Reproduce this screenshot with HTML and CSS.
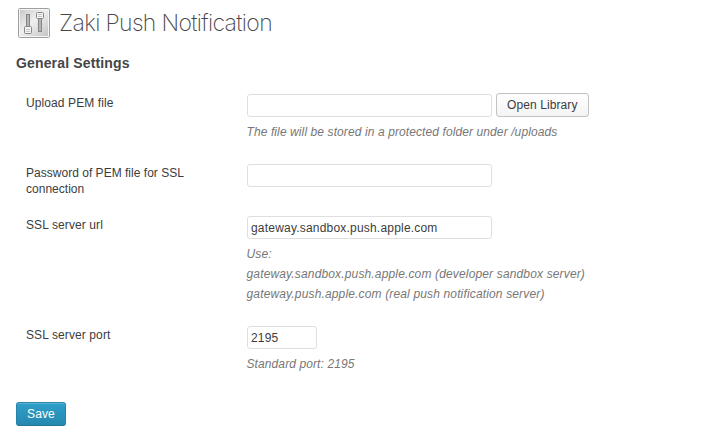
FILE: index.html
```html
<!DOCTYPE html>
<html lang="en">
<head>
<meta charset="utf-8">
<title>Zaki Push Notification</title>
<link rel="stylesheet" href="styles.css">
</head>
<body>
<main class="page">
  <header class="page-header">
    <svg class="page-icon" width="32" height="32" viewBox="0 0 32 32" aria-hidden="true">
      <defs>
        <linearGradient id="plate" x1="0" y1="0" x2="1" y2="1"><stop offset="0" stop-color="#c9c9c9"/><stop offset=".45" stop-color="#f0f0f0"/><stop offset="1" stop-color="#c4c4c4"/></linearGradient>
      </defs>
      <rect x=".5" y=".5" width="31" height="29" rx="1" fill="#f4f4f4" stroke="#a0a0a0"/>
      <rect x="2" y="2" width="28" height="26" fill="url(#plate)"/>
      <rect x="8.500" y="6.500" width="3" height="14" fill="#b5b5b5" stroke="#858585"/>
      <rect x="20.500" y="9.500" width="3" height="14" fill="#b5b5b5" stroke="#858585"/>
      <rect x="6.500" y="18.500" width="7" height="7" rx="1" fill="#f5f5f5" stroke="#858585"/>
      <rect x="18.500" y="4.500" width="7" height="6" rx="1" fill="#f5f5f5" stroke="#858585"/>
      <path d="M8 21.500h4M8 23.500h4M20 6.500h4M20 8.500h4" stroke="#c4c4c4"/>
    </svg>
    <h1 class="page-title">Zaki Push Notification</h1>
  </header>
  <h2 class="section-title">General Settings</h2>
  <form class="settings">
    <div class="row row-upload">
      <label class="label" for="pem">Upload PEM file</label>
      <div>
        <div class="controls"><input class="field" id="pem" type="text"><button class="button" type="button">Open Library</button></div>
        <p class="hint hint-short">The file will be stored in a protected folder under /uploads</p>
      </div>
    </div>
    <div class="row row-password">
      <label class="label label-long" for="password">Password of PEM file for SSL connection</label>
      <div class="controls"><input class="field" id="password" type="text"></div>
    </div>
    <div class="row row-url">
      <label class="label" for="url">SSL server url</label>
      <div>
        <div class="controls"><input class="field" id="url" type="text" value="gateway.sandbox.push.apple.com"></div>
        <p class="hint">Use:<br>gateway.sandbox.push.apple.com (developer sandbox server)<br>gateway.push.apple.com (real push notification server)</p>
      </div>
    </div>
    <div class="row row-port">
      <label class="label" for="port">SSL server port</label>
      <div>
        <div class="controls"><input class="field field-small" id="port" type="text" value="2195"></div>
        <p class="hint hint-short">Standard port: 2195</p>
      </div>
    </div>
    <button class="button button-primary" type="button">Save</button>
  </form>
</main>
</body>
</html>
```
FILE: styles.css
```css
* { box-sizing: border-box; }
body { margin: 0; background: #fff; color: #3c3c3c; font: 12px/16px "Liberation Sans", Arial, sans-serif; }
.page { padding: 8px 0 0 16px; }
.page-header { display: flex; height: 32px; padding-left: 2px; }
.page-icon { flex: none; }
.page-title { margin: 0 0 0 9px; color: #464646; font: 200 23px/30px Inter, "Open Sans", sans-serif; letter-spacing: -.66px; white-space: nowrap; }
.section-title { margin: 15px 0 23px; color: #464646; font-size: 14px; line-height: 16px; font-weight: bold; letter-spacing: .15px; }
.row { display: grid; grid-template-columns: 173px 1fr; column-gap: 48px; padding-left: 10px; }
.row-upload { height: 70px; }
.row-password { height: 52px; }
.row-url { height: 110px; }
.row-port { height: 76px; }
.label { padding-top: 1px; letter-spacing: .1px; }
.label-long { letter-spacing: .02px; }
.controls { display: flex; align-items: flex-start; gap: 4px; height: 23px; }
.field { width: 245px; height: 23px; margin: 0; padding: 0 3px; border: 1px solid #dfdfdf; border-radius: 3px; background: #fff; color: #3c3c3c; font: inherit; letter-spacing: .2px; }
.field-small { width: 70px; }
.hint { margin: 5px 0 0 -.5px; color: #777; font-style: italic; line-height: 20px; letter-spacing: .15px; }
.hint-short { letter-spacing: .1px; }
.button { height: 24px; margin: -1px 0 0; padding: 0 10px; border: 1px solid #c2c2c2; border-radius: 3px; background: linear-gradient(#fefefe, #f4f4f4); color: #3c3c3c; font: inherit; letter-spacing: .1px; white-space: nowrap; }
.button-primary { display: block; width: 50px; margin: 0; border-color: #2e86ab #2783ab #22779d; background: linear-gradient(#2f9fc9, #2688af); color: #fff; box-shadow: inset 0 1px 0 rgba(120, 200, 230, .5); }
```
